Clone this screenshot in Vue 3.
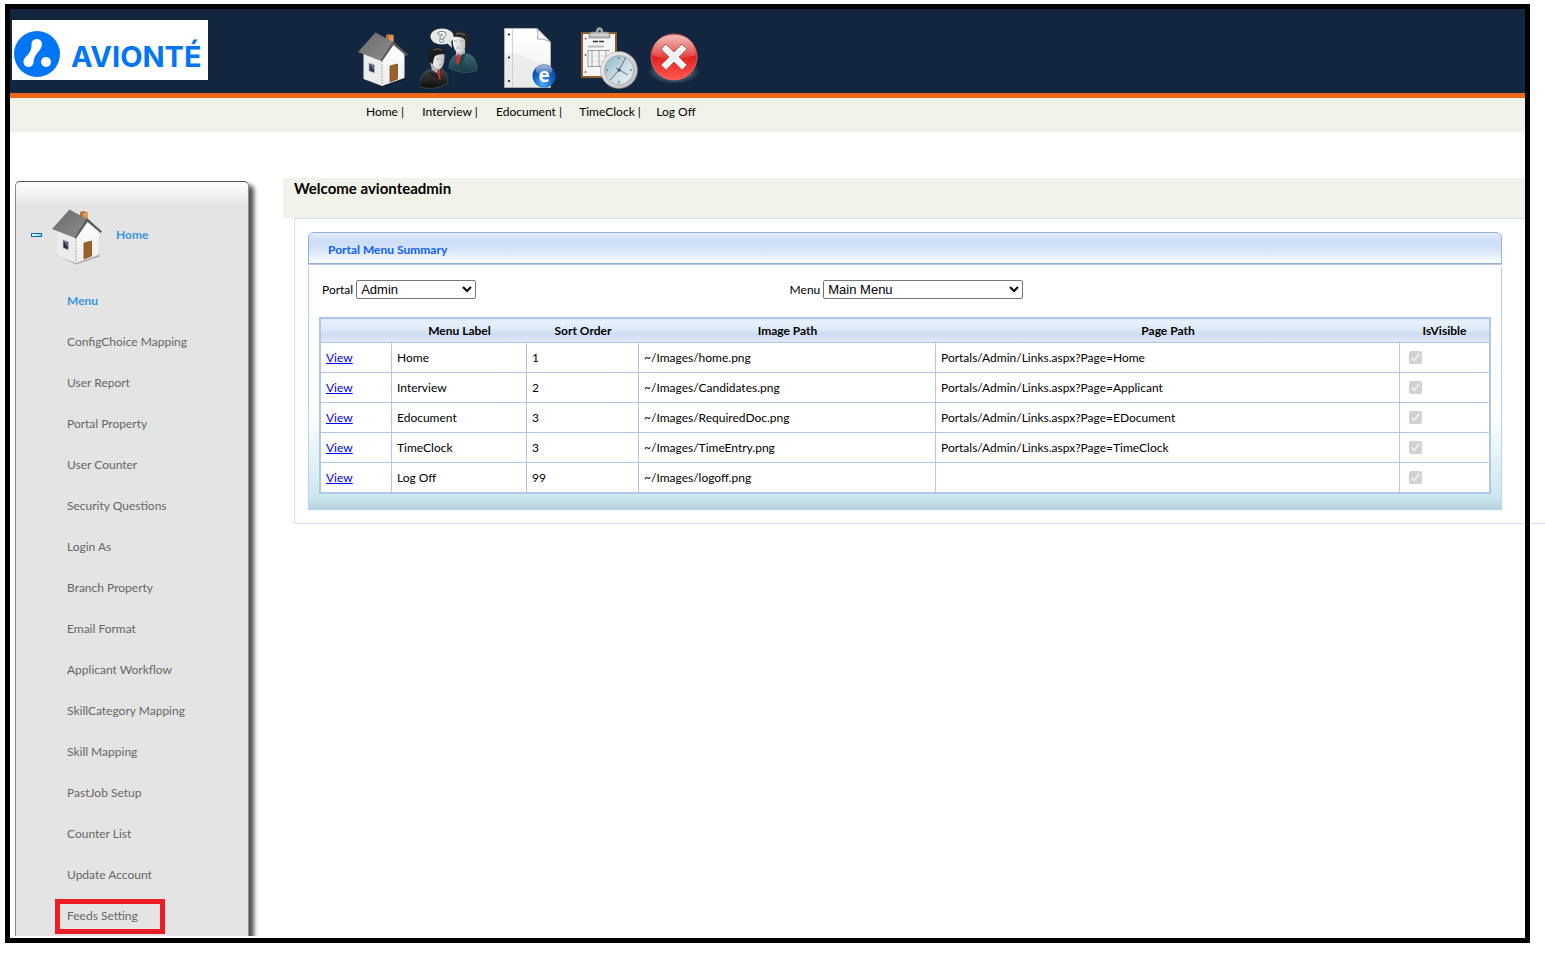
<template>
  <!-- shared drawings -->
  <svg class="sprites" width="0" height="0" aria-hidden="true">
    <defs>
      <linearGradient id="roof" x1="0" y1="0" x2="1" y2="1">
        <stop offset="0" stop-color="#6a6a6a" />
        <stop offset="1" stop-color="#8d8d8d" />
      </linearGradient>
      <linearGradient id="wall" x1="0" y1="0" x2="0" y2="1">
        <stop offset="0" stop-color="#ffffff" />
        <stop offset="1" stop-color="#ececec" />
      </linearGradient>
      <linearGradient id="teal" x1="0" y1="0" x2="0" y2="1">
        <stop offset="0" stop-color="#3f6d77" />
        <stop offset="1" stop-color="#173a44" />
      </linearGradient>
      <linearGradient id="suit" x1="0" y1="0" x2="0" y2="1">
        <stop offset="0" stop-color="#4a4a4a" />
        <stop offset="1" stop-color="#0b0b0b" />
      </linearGradient>
      <linearGradient id="face" x1="0" y1="0" x2="1" y2="0">
        <stop offset="0" stop-color="#fafafa" />
        <stop offset="1" stop-color="#bdbdbd" />
      </linearGradient>
      <linearGradient id="paper" x1="0" y1="0" x2="0" y2="1">
        <stop offset="0" stop-color="#ffffff" />
        <stop offset="1" stop-color="#efefef" />
      </linearGradient>
      <radialGradient id="globe" cx="0.45" cy="0.8" r="0.8">
        <stop offset="0" stop-color="#4fb4f4" />
        <stop offset="0.5" stop-color="#1463c4" />
        <stop offset="1" stop-color="#0a3f96" />
      </radialGradient>
      <linearGradient id="dial" x1="0" y1="0" x2="1" y2="1">
        <stop offset="0" stop-color="#86b0c6" />
        <stop offset="0.5" stop-color="#c6dbe5" />
        <stop offset="1" stop-color="#eef3f6" />
      </linearGradient>
      <linearGradient id="rim" x1="0" y1="0" x2="1" y2="1">
        <stop offset="0" stop-color="#f4f4f4" />
        <stop offset="1" stop-color="#b5b5b5" />
      </linearGradient>
      <linearGradient id="red" x1="0" y1="0" x2="0" y2="1">
        <stop offset="0" stop-color="#d8473f" />
        <stop offset="0.5" stop-color="#e2221f" />
        <stop offset="1" stop-color="#ff5a50" />
      </linearGradient>
      <linearGradient id="gloss" x1="0" y1="0" x2="0" y2="1">
        <stop offset="0" stop-color="#fff" stop-opacity="0.65" />
        <stop offset="1" stop-color="#fff" stop-opacity="0.1" />
      </linearGradient>
      <radialGradient id="haze">
        <stop offset="0.6" stop-color="#8b98a8" stop-opacity="0.5" />
        <stop offset="1" stop-color="#8b98a8" stop-opacity="0" />
      </radialGradient>
    </defs>

    <symbol id="icon-home" viewBox="0 0 60 62">
      <path d="M7 51 L27 60.500 L51 52.500 L49 48 Z" fill="#000" opacity="0.250" />
      <path d="M31 8 L34 7 L38.500 8 V19 L31 14 Z" fill="#b8753a" />
      <path d="M34 9 L38.500 8 V19 L34 15 Z" fill="#d99858" />
      <path d="M8.500 26 L27 33 V59 L8.500 52 Z" fill="#ececec" />
      <path d="M27 33 L38 17 L49.500 27 V51 L27 59 Z" fill="url(#wall)" />
      <path d="M27 34 V58" stroke="#9a9a9a" stroke-width="0.800" stroke-dasharray="2 1" />
      <path d="M20.500 5.500 L38 15 L26 34 L3 25 Z" fill="url(#roof)" />
      <path d="M38 14 L53 27.500 L51.500 29 L38.500 18 L27 34.500 L25.500 33.500 Z" fill="#5b5b5b" />
      <path d="M14 36 L19.500 38 V46 L14 44 Z" fill="#2b3140" stroke="#b9bec8" stroke-width="0.800" />
      <path d="M15.500 38 L18 39 V42" stroke="#8ea2c0" fill="none" />
      <path d="M35 39 L42.500 37 V52 L35 55 Z" fill="#9a6128" stroke="#7a5226" stroke-width="0.800" />
    </symbol>

    <symbol id="icon-interview" viewBox="0 0 60 62">
      <path d="M30 34 Q33 28 39 26 L49 27 Q57 31 57 43 Q44 49 29 41 Z" fill="url(#teal)" stroke="#55767e" stroke-width="0.500" />
      <path d="M36 22 H45 V27 L39 31 L36 28 Z" fill="#b5b5b5" />
      <path d="M37 28 L39.500 27 L40.500 30 L39 38 L36 35 Z" fill="#d92b2b" />
      <path d="M41 28 L46 26 L42 38 L39 40 Z" fill="#1d444e" />
      <path d="M32.500 12 Q33 6 40 6 Q47 7 46 14 Q46 25 39 26 Q33 25 32.500 12 Z" fill="url(#face)" />
      <path d="M34 14 H37 M40 14 H43 M36 21 H39" stroke="#999" stroke-width="0.800" />
      <path d="M33 10 Q32 3 40 4 Q49 4 49 13 Q48 20 45.500 21 L45 13 Q42 9 33 10 Z" fill="#282828" />
      <path d="M36 7 Q41 5 45 8" stroke="#707070" fill="none" />
      <path d="M0 60 Q-1 48 8 43 L20 41 Q29 45 28 56 Q15 64 0 60 Z" fill="url(#suit)" stroke="#666" stroke-width="0.500" />
      <path d="M10 35 H20 V43 L17 46 L12 43 Z" fill="#b5b5b5" />
      <path d="M8 44 L17 47 L19 54 L12 49 Z" fill="#222" />
      <path d="M17 43 L19.500 42 L20.500 53 L19 52 Z" fill="#e22929" />
      <path d="M12 28 Q13 21 19 23 Q25 24 24.500 31 Q24 41 19 42 Q12 42 12 28 Z" fill="url(#face)" />
      <path d="M16 32 H19 M22 32 H24 M19 38 H22" stroke="#999" stroke-width="0.800" />
      <path d="M9 35 Q5 21 15 19.500 Q25 19 25 27 Q18 27 15 29 Q13 33 13 37 Z" fill="#1d1d1d" />
      <path d="M13 23 Q17 20.500 22 23" stroke="#666" fill="none" />
      <ellipse cx="22" cy="9.500" rx="11.500" ry="8" fill="#e6e9e7" />
      <path d="M26 15 L32 21 L31 13 Z" fill="#e6e9e7" />
    </symbol>

    <symbol id="icon-edocument" viewBox="0 0 60 62">
      <path d="M5.500 1.500 H38 L51.500 15 V60.500 H5.500 Z" fill="url(#paper)" stroke="#b9bdc1" stroke-width="0.800" />
      <path d="M6 28 Q16 24 25 30 T51 37 V60 H6 Z" fill="#e3e3e3" opacity="0.500" />
      <path d="M13.500 2 V60" stroke="#cfcfcf" />
      <circle cx="10" cy="7.500" r="1" />
      <circle cx="10" cy="30.500" r="1" />
      <circle cx="10" cy="54" r="1" />
      <path d="M38 1.500 Q40 8 38.500 12 Q45 11 51.500 15 Z" fill="#fff" stroke="#8c8c8c" stroke-width="0.800" />
      <circle cx="45" cy="49" r="11.500" fill="url(#globe)" />
      <ellipse cx="45" cy="43" rx="8.500" ry="5" fill="url(#gloss)" />
    </symbol>

    <symbol id="icon-timeclock" viewBox="0 0 60 62">
      <rect x="1" y="5" width="36" height="46" rx="1" fill="#8b5d2e" />
      <rect x="3" y="7" width="32" height="42" fill="#f6f6f6" />
      <path d="M13 14.500 H25" stroke="#333" stroke-width="1.500" stroke-dasharray="5 1" />
      <path d="M8 19.500 H24" stroke="#bbb" stroke-width="2" />
      <path d="M8 23.500 H30 M8 23 V40 M12 23 V40 M19 23 V40 M26 23 V40 M8 39.500 H30" stroke="#888" fill="none" stroke-width="0.800" />
      <path d="M8 29 H30 M8 34 H30" stroke="#ccc" stroke-width="0.600" />
      <circle cx="5.500" cy="11.500" r="0.900" fill="#a04a3a" />
      <circle cx="5.500" cy="28" r="0.900" fill="#a04a3a" />
      <circle cx="5.500" cy="45" r="0.900" fill="#a04a3a" />
      <path d="M9 11 V8 Q9 5 13 5 H16 Q16 0.500 19.500 0.500 Q23 0.500 23 5 H26 Q30 5 30 8 V11 Z" fill="#b9b9b9" stroke="#777" stroke-width="0.600" />
      <path d="M11 8 H28" stroke="#eee" />
      <circle cx="19.500" cy="4" r="1.500" fill="#45505c" />
      <circle cx="39" cy="43" r="18.500" fill="url(#rim)" stroke="#8f8f8f" stroke-width="0.500" />
      <circle cx="39" cy="43" r="14.500" fill="url(#dial)" stroke="#999" stroke-width="0.600" />
      <path d="M39 30 V32 M39 54 V56 M26 43 H28 M50 43 H52" stroke="#48545c" />
      <path d="M39 43 L46 30 M48 48 L36 41 M39 43 L30 53" stroke="#46525a" stroke-width="0.800" fill="none" />
      <circle cx="39" cy="43" r="1.500" fill="#36424a" />
    </symbol>

    <symbol id="icon-logoff" viewBox="0 0 60 62">
      <ellipse cx="28" cy="44" rx="26" ry="13" fill="url(#haze)" />
      <circle cx="28" cy="30" r="23" fill="url(#red)" stroke="#f06a62" stroke-width="0.800" />
      <path d="M6 28 Q8 8 28 8 Q48 8 50 28 Q28 36 6 28 Z" fill="url(#gloss)" />
      <path d="M20 17 L28 25 L36 17 L41 22 L33 30 L41 38 L36 43 L28 35 L20 43 L15 38 L23 30 L15 22 Z" fill="#f4f4f4" stroke="#b94a45" stroke-width="0.800" stroke-linejoin="round" />
    </symbol>
  </svg>

  <div class="frame">
    <header class="top-bar">
      <a href="#" class="logo" aria-label="Avionté">
        <svg width="196" height="60" viewBox="0 0 196 60">
          <circle cx="25" cy="34" r="23" fill="#0075f6" />
          <path
            d="M25 19 C28 19 30 21.500 30 24 C30 31 22 33 21.500 42 C21.500 45 19 47 16.500 47 C13.500 47 11.500 44.500 11.500 42 C11.500 36 20 35 19.500 24 C19.500 21.500 21.500 19 25 19 Z"
            fill="#fff"
          />
          <circle cx="34" cy="42" r="5" fill="#fff" />
          <text x="59" y="47" class="logo-text">AVIONTÉ</text>
        </svg>
      </a>
      <div class="nav-grid nav-icons">
        <a v-for="item in navItems" :key="item.id" href="#" :aria-label="item.label">
          <svg width="60" height="62">
            <use :href="`#icon-${item.id}`" />
            <text v-if="item.id === 'interview'" x="22" y="15" text-anchor="middle" class="question">?</text>
            <text v-if="item.id === 'edocument'" x="45" y="55" text-anchor="middle" class="e-letter">e</text>
          </svg>
        </a>
      </div>
    </header>

    <nav class="nav-grid nav-bar">
      <span v-for="(item, index) in navItems" :key="item.id">
        <a href="#">{{ item.label }}</a>
        <template v-if="index < navItems.length - 1"> |</template>
      </span>
    </nav>

    <div class="content">
      <aside class="sidebar">
        <div class="sidebar-head">
          <button class="collapse" aria-label="Collapse"></button>
          <svg width="60" height="62"><use href="#icon-home" /></svg>
          <a href="#">Home</a>
        </div>
        <h2>Menu</h2>
        <ul>
          <li v-for="entry in menu" :key="entry" :class="{ marked: entry === 'Feeds Setting' }">
            <a href="#">{{ entry }}</a>
          </li>
        </ul>
      </aside>

      <main>
        <h1>Welcome avionteadmin</h1>
        <section class="panel">
          <div class="card">
            <h3>Portal Menu Summary</h3>
            <div class="card-body">
              <div class="filters">
                <div class="filter">
                  <label for="portal">Portal</label>
                  <select id="portal" v-model="portal" class="short">
                    <option>Admin</option>
                  </select>
                </div>
                <div class="filter">
                  <label for="menu">Menu</label>
                  <select id="menu" v-model="selectedMenu" class="long">
                    <option>Main Menu</option>
                  </select>
                </div>
              </div>

              <table>
                <colgroup>
                  <col class="col-view" />
                  <col class="col-label" />
                  <col class="col-sort" />
                  <col class="col-image" />
                  <col />
                  <col class="col-visible" />
                </colgroup>
                <thead>
                  <tr>
                    <th></th>
                    <th>Menu Label</th>
                    <th>Sort Order</th>
                    <th>Image Path</th>
                    <th>Page Path</th>
                    <th>IsVisible</th>
                  </tr>
                </thead>
                <tbody>
                  <tr v-for="row in rows" :key="row.label">
                    <td><a href="#">View</a></td>
                    <td>{{ row.label }}</td>
                    <td>{{ row.sort }}</td>
                    <td>{{ row.image }}</td>
                    <td>{{ row.page }}</td>
                    <td class="check"><input type="checkbox" checked disabled :aria-label="`${row.label} visible`" /></td>
                  </tr>
                </tbody>
              </table>
            </div>
          </div>
        </section>
        <div class="rule"></div>
      </main>
    </div>
  </div>
</template>

<script setup>
import { ref } from 'vue';

const portal = ref('Admin');
const selectedMenu = ref('Main Menu');

const navItems = [
  { id: 'home', label: 'Home' },
  { id: 'interview', label: 'Interview' },
  { id: 'edocument', label: 'Edocument' },
  { id: 'timeclock', label: 'TimeClock' },
  { id: 'logoff', label: 'Log Off' },
];

const menu = [
  'ConfigChoice Mapping',
  'User Report',
  'Portal Property',
  'User Counter',
  'Security Questions',
  'Login As',
  'Branch Property',
  'Email Format',
  'Applicant Workflow',
  'SkillCategory Mapping',
  'Skill Mapping',
  'PastJob Setup',
  'Counter List',
  'Update Account',
  'Feeds Setting',
];

const rows = [
  { label: 'Home', sort: 1, image: '~/Images/home.png', page: 'Portals/Admin/Links.aspx?Page=Home' },
  { label: 'Interview', sort: 2, image: '~/Images/Candidates.png', page: 'Portals/Admin/Links.aspx?Page=Applicant' },
  { label: 'Edocument', sort: 3, image: '~/Images/RequiredDoc.png', page: 'Portals/Admin/Links.aspx?Page=EDocument' },
  { label: 'TimeClock', sort: 3, image: '~/Images/TimeEntry.png', page: 'Portals/Admin/Links.aspx?Page=TimeClock' },
  { label: 'Log Off', sort: 99, image: '~/Images/logoff.png', page: '' },
];
</script>

<style>
body {
  margin: 0;
  background: #fff;
}
</style>

<style scoped>
.sprites {
  position: absolute;
}

.frame {
  position: relative;
  margin: 4px 15px 12px 5px;
  padding: 5px;
  font: 12px/16px Lato, "Noto Sans", sans-serif;
  color: #000;
}

/* thick outline drawn over the page content */
.frame::after {
  content: "";
  position: absolute;
  inset: 0;
  border: 5px solid #000;
  pointer-events: none;
}

.top-bar {
  display: flex;
  align-items: flex-end;
  height: 84px;
  background: #12273f;
  border-bottom: 5px solid #ec691c;
}

.logo {
  margin: 0 149px 13px 2px;
  width: 196px;
  height: 60px;
  background: #fff;
}

.logo-text {
  font: 700 29px Inter, sans-serif;
  fill: #0075f6;
}

.question {
  font: 700 15px "Open Sans", sans-serif;
  fill: #fff;
  stroke: #888;
  stroke-width: 2px;
  paint-order: stroke;
}

.e-letter {
  font: 700 19px "Open Sans", sans-serif;
  fill: #fff;
}

.nav-grid {
  display: grid;
  grid-template-columns: 56px 74px 84px 78px 54px;
  justify-items: center;
}

.nav-icons {
  padding-bottom: 4px;
}

.nav-icons svg {
  display: block;
  margin: 0 -10px;
}

.nav-bar {
  height: 28px;
  padding: 0 0 6px 347px;
  align-items: center;
  background: #f0f1e8;
}

.nav-bar a {
  color: #000;
  text-decoration: none;
}

.content {
  display: flex;
  align-items: flex-start;
}

.sidebar {
  flex: none;
  box-sizing: border-box;
  width: 234px;
  margin: 49px 34px 2px 5px;
  border: 1px solid #8c8c8c;
  border-top-color: #555;
  border-bottom: 0;
  border-radius: 5px 5px 0 0;
  background: #e4e4e4 linear-gradient(#fff, #e4e4e4) no-repeat 0 0 / 100% 24px;
  box-shadow: 5px 4px 4px #555;
  clip-path: inset(-4px -12px 0 -4px);
}

.sidebar-head {
  display: flex;
  align-items: center;
  padding: 22px 0 14px 15px;
}

.sidebar-head svg {
  margin: 0 7px;
}

.sidebar-head a,
.sidebar h2 {
  color: #3a95d8;
  font-weight: 700;
  text-decoration: none;
}

.collapse {
  width: 11px;
  height: 4px;
  padding: 0;
  border: 1px solid #0d6aa0;
  background: linear-gradient(90deg, #fff, #7fd3f2);
}

.sidebar h2 {
  margin: 0;
  padding-left: 51px;
  font-size: 12px;
  line-height: 41px;
}

.sidebar ul {
  margin: 0;
  padding: 0 0 0 51px;
  list-style: none;
}

.sidebar li {
  position: relative;
  line-height: 41px;
}

.sidebar li a {
  color: #666;
  text-decoration: none;
}

.marked::before {
  content: "";
  position: absolute;
  top: 4px;
  left: -12px;
  width: 100px;
  height: 25px;
  border: 5px solid #ee1c25;
  pointer-events: none;
}

main {
  flex: 1;
  min-width: 0;
  padding-top: 46px;
}

h1 {
  box-sizing: border-box;
  height: 40px;
  margin: 0;
  padding: 2px 11px;
  background: #f1f2e9;
  font-size: 15px;
  line-height: 16px;
}

.panel {
  margin-left: 11px;
  padding: 13px 23px 13px 13px;
  border: solid #cfe0f7;
  border-width: 1px 0 0 1px;
}

/* lower edge runs out past the page */
.rule {
  height: 1px;
  margin: 0 -20px 0 11px;
  background: #d6def0;
}

h3 {
  box-sizing: border-box;
  height: 32px;
  margin: 0 0 3px;
  padding: 0 19px;
  border: 1px solid #8fb1e0;
  border-radius: 6px 6px 0 0;
  background: linear-gradient(#e6effa, #cbdcf6 30%, #dce9fa 65%, #fbfdff);
  box-shadow: 0 1px 0 #b5c7e2;
  color: #0f5fff;
  font-size: 12px;
  line-height: 34px;
}

.card-body {
  padding: 13px 10px 15px;
  border: 1px solid #b5d2f8;
  border-top: 0;
  background: linear-gradient(#fff 60%, #cde6ef 95%, #b9d3dc);
}

.filters {
  display: grid;
  grid-template-columns: 40% 60%;
  padding-left: 3px;
  margin-bottom: 18px;
}

.filter {
  display: flex;
  align-items: center;
  gap: 3px;
}

select {
  height: 19px;
  padding: 0;
  border: 1px solid #767676;
  border-radius: 2px;
  background: #fff;
  color: #000;
  font: 13px "Liberation Sans", sans-serif;
}

.short {
  width: 120px;
}

.long {
  width: 200px;
}

table {
  width: 100%;
  table-layout: fixed;
  border: 2px solid #aec8ea;
  border-spacing: 0;
  background: #fff;
}

.col-view {
  width: 71px;
}

.col-label {
  width: 135px;
}

.col-sort {
  width: 112px;
}

.col-image {
  width: 297px;
}

.col-visible {
  width: 89px;
}

thead tr {
  background: linear-gradient(#d5e3f5, #e8f1fc 10%, #dbe7f6 50%, #cddcf2 65%, #dfe9f8);
}

th {
  height: 23px;
  padding: 0;
}

td {
  height: 29px;
  padding: 0 5px;
  border-top: 1px solid #aec8ea;
  border-right: 1px solid #aec8ea;
}

td:last-child {
  border-right: 0;
}

td a {
  color: #0000ee;
}

.check input {
  display: block;
  width: 13px;
  height: 13px;
  margin: 0 4px;
}
</style>
